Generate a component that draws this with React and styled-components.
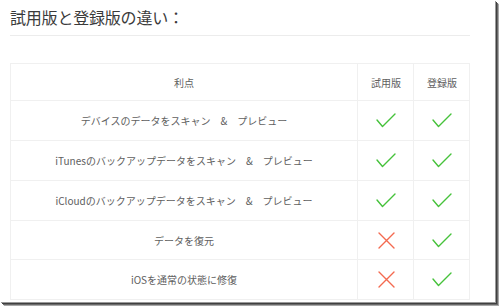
import React from "react";
import styled, { createGlobalStyle } from "styled-components";

const GlobalStyle = createGlobalStyle`
  html, body {
    margin: 0;
    padding: 0;
    background: #ffffff;
  }
  body {
    font-family: "Noto Sans CJK JP", "Noto Sans", sans-serif;
  }
`;

const Page = styled.div`
  width: 499px;
  height: 306px;
  overflow: hidden;
  background: #ffffff;
`;

const Frame = styled.div`
  width: 495px;
  height: 302px;
  background: #ffffff;
  box-sizing: border-box;
  padding-left: 10px;
  box-shadow: 1px 1px 0 #9a9a9a, 2px 2px 0 #3f3f3f, 3px 3px 0 #6a6a6a,
    4px 4px 1px #a8a8a8;
  overflow: hidden;
`;

const Title = styled.h2`
  margin: 0;
  padding-top: 7px;
  font-size: 16px;
  line-height: 20px;
  font-weight: 400;
  color: #3a3a3a;
  letter-spacing: -0.2px;
`;

const Rule = styled.div`
  width: 460px;
  height: 1px;
  margin-top: 8px;
  background: #ececec;
`;

const Grid = styled.div`
  display: grid;
  grid-template-columns: 347px 56px 56px;
  grid-template-rows: 37px repeat(3, 40px) 39px 40px;
  width: 460px;
  margin-top: 27px;
  border-top: 1px solid #f0f0f0;
  border-left: 1px solid #f0f0f0;
  box-sizing: border-box;
`;

const Cell = styled.div`
  box-sizing: border-box;
  border-right: 1px solid #f0f0f0;
  border-bottom: 1px solid #f0f0f0;
  display: flex;
  align-items: center;
  justify-content: center;
  font-size: 10px;
  color: #606060;
  white-space: nowrap;
  padding-left: ${(p) => (p.$label ? 0 : 1)}px;
`;

const Check = () => (
  <svg width="20" height="15" viewBox="0 0 20 15" aria-hidden="true">
    <polyline
      points="1,7 6.5,13.5 19,1"
      fill="none"
      stroke="#46c23b"
      strokeWidth="1.4"
      strokeLinecap="round"
      strokeLinejoin="round"
    />
  </svg>
);

const Cross = () => (
  <svg width="17" height="17" viewBox="0 0 17 17" aria-hidden="true">
    <path
      d="M1 1 L16 16 M16 1 L1 16"
      fill="none"
      stroke="#f46a50"
      strokeWidth="1.4"
      strokeLinecap="round"
    />
  </svg>
);

const features = [
  { label: "デバイスのデータをスキャン　&　プレビュー", trial: true, full: true },
  { label: "iTunesのバックアップデータをスキャン　&　プレビュー", trial: true, full: true },
  { label: "iCloudのバックアップデータをスキャン　&　プレビュー", trial: true, full: true },
  { label: "データを復元", trial: false, full: true },
  { label: "iOSを通常の状態に修復", trial: false, full: true },
];

export default function App() {
  return (
    <Page>
      <GlobalStyle />
      <Frame>
        <Title>試用版と登録版の違い：</Title>
        <Rule />
        <Grid>
          <Cell $label>利点</Cell>
          <Cell>試用版</Cell>
          <Cell>登録版</Cell>
          {features.map((f) => (
            <React.Fragment key={f.label}>
              <Cell $label>{f.label}</Cell>
              <Cell>{f.trial ? <Check /> : <Cross />}</Cell>
              <Cell>{f.full ? <Check /> : <Cross />}</Cell>
            </React.Fragment>
          ))}
        </Grid>
      </Frame>
    </Page>
  );
}
